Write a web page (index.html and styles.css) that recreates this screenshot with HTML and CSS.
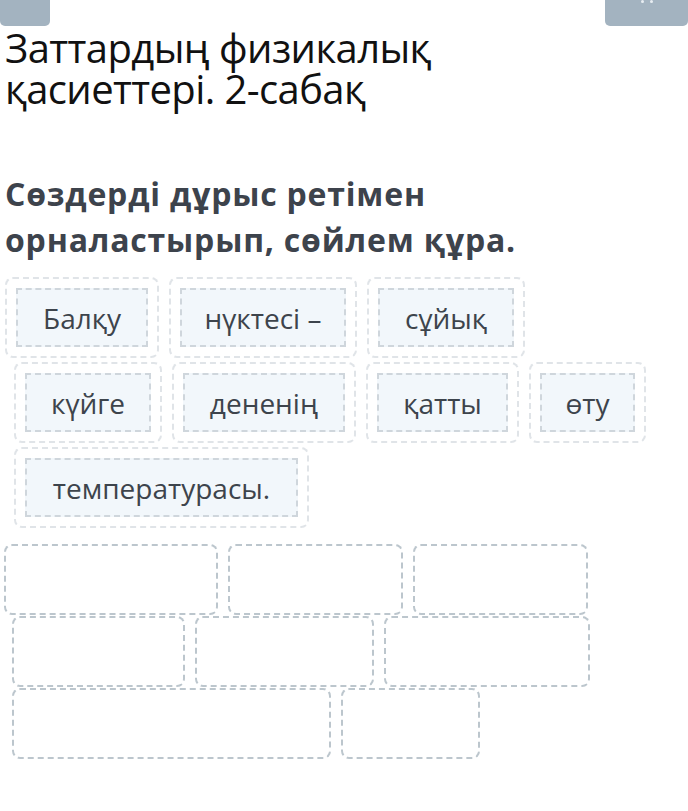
FILE: index.html
```html
<!DOCTYPE html>
<html lang="kk">
<head>
<meta charset="utf-8">
<link rel="stylesheet" href="styles.css">
</head>
<body>
<div class="topbar">
  <div class="btn btn-left"></div>
  <div class="btn btn-right"><span class="dot"></span><span class="dot"></span></div>
</div>
<h1 class="title">Заттардың физикалық<br>қасиеттері. 2-сабақ</h1>
<h2 class="task">Сөздерді дұрыс ретімен<br>орналастырып, сөйлем құра.</h2>
<div class="words">
  <div class="row row1">
    <div class="chip w1"><div class="chip-in">Балқу</div></div>
    <div class="chip w2"><div class="chip-in">нүктесі –</div></div>
    <div class="chip w3"><div class="chip-in">сұйық</div></div>
  </div>
  <div class="row row2">
    <div class="chip w4"><div class="chip-in">күйге</div></div>
    <div class="chip w5"><div class="chip-in">дененің</div></div>
    <div class="chip w6"><div class="chip-in">қатты</div></div>
    <div class="chip w7"><div class="chip-in">өту</div></div>
  </div>
  <div class="row row2">
    <div class="chip w8"><div class="chip-in">температурасы.</div></div>
  </div>
</div>
<div class="slots">
  <div class="srow srow1">
    <div class="slot s1"></div>
    <div class="slot s2"></div>
    <div class="slot s3"></div>
  </div>
  <div class="srow srow2">
    <div class="slot s4"></div>
    <div class="slot s5"></div>
    <div class="slot s6"></div>
  </div>
  <div class="srow srow2">
    <div class="slot s7"></div>
    <div class="slot s8"></div>
  </div>
</div>
</body>
</html>
```
FILE: styles.css
```css
html, body {
  margin: 0;
  padding: 0;
  background: #ffffff;
}
body {
  width: 688px;
  height: 811px;
  overflow: hidden;
  font-family: "Open Sans", "Noto Sans", sans-serif;
}
.topbar {
  display: flex;
  justify-content: space-between;
  height: 26px;
}
.btn {
  background: #a3b3c0;
  height: 26px;
  border-radius: 0 0 5px 5px;
}
.btn-left {
  width: 50px;
}
.btn-right {
  width: 83px;
  display: flex;
  justify-content: center;
  gap: 6px;
}
.dot {
  width: 3px;
  height: 3px;
  border-radius: 50%;
  background: #e8eef2;
}
.title {
  margin: 0;
  padding: 1px 0 0 5px;
  font-weight: 400;
  font-size: 40px;
  line-height: 41px;
  color: #111111;
  letter-spacing: -0.6px;
}
.task {
  margin: 0;
  padding: 62px 0 0 5px;
  font-weight: 700;
  font-size: 32px;
  line-height: 46px;
  color: #3d434c;
  letter-spacing: 0.8px;
}
.words {
  padding-top: 14px;
  display: flex;
  flex-direction: column;
  gap: 4px;
}
.row {
  display: flex;
  gap: 10px;
}
.row1 {
  padding-left: 5px;
}
.row2 {
  padding-left: 14px;
}
.chip {
  border: 2px dashed #e0e4e8;
  border-radius: 8px;
  padding: 9px;
  background: #ffffff;
}
.chip-in {
  height: 55px;
  border: 2px dashed #cfd6dc;
  background: #f2f7fb;
  display: flex;
  align-items: center;
  justify-content: center;
  font-size: 28px;
  line-height: 1;
  color: #3d444c;
}
.w1 .chip-in { width: 128px; }
.w2 .chip-in { width: 162px; }
.w3 .chip-in { width: 132px; }
.w4 .chip-in { width: 122px; }
.w5 .chip-in { width: 158px; }
.w6 .chip-in { width: 127px; }
.w7 .chip-in { width: 91px; }
.w8 .chip-in { width: 269px; }
.slots {
  padding-top: 16px;
  display: flex;
  flex-direction: column;
  gap: 1px;
}
.srow {
  display: flex;
  gap: 10px;
}
.srow1 { padding-left: 4px; }
.srow2 { padding-left: 12px; }
.slot {
  height: 67px;
  border: 2px dashed #bcc6cd;
  border-radius: 8px;
}
.s1 { width: 210px; }
.s2 { width: 171px; }
.s3 { width: 171px; }
.s4 { width: 169px; }
.s5 { width: 175px; }
.s6 { width: 202px; }
.s7 { width: 315px; }
.s8 { width: 135px; }
```
